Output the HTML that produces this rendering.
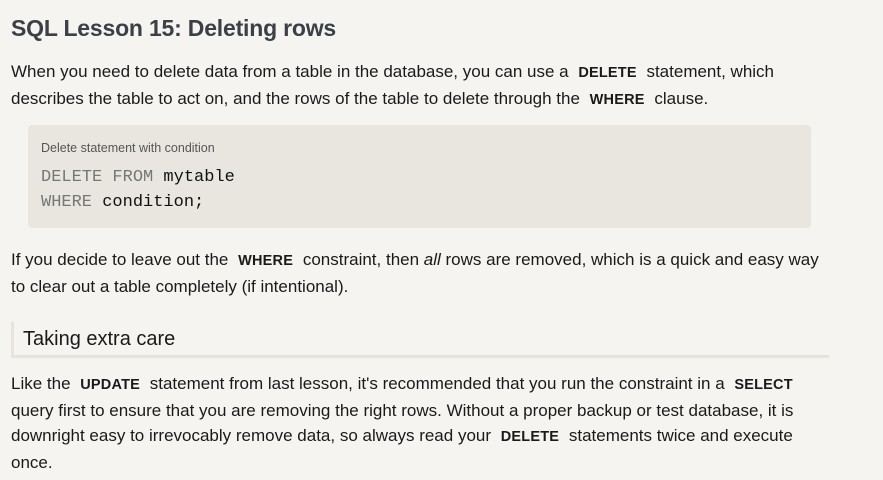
<!DOCTYPE html>
<html><head><style>
body{margin:0;background:#f5f4f0;width:883px;height:480px;overflow:hidden;font-family:"Liberation Sans",sans-serif;color:#1a1a1a}
.p{position:absolute;left:11px;font-size:17px;line-height:25px;white-space:nowrap}
b{font-size:14.5px;padding:0 5px;letter-spacing:0.2px}
h1{position:absolute;left:11px;top:15px;margin:0;font-size:23px;font-weight:bold;color:#3b4046;letter-spacing:-0.2px}
.code{position:absolute;left:28px;top:125px;width:783px;height:103px;background:#e8e6df;border-radius:4px}
.cap{position:absolute;left:13px;top:16px;font-size:12.5px;color:#555}
.mono{position:absolute;left:13px;font-family:"Liberation Mono",monospace;font-size:17px;color:#111}
.k{color:#777}
.h2{position:absolute;left:11px;top:322px;width:806px;height:33px;border-left:3px solid #e6e4dc;border-bottom:3px solid #e6e4dc;font-size:20px;line-height:34px;padding-left:9px;box-sizing:content-box}
</style></head><body>
<h1>SQL Lesson 15: Deleting rows</h1>
<div class="p" style="top:59px">When you need to delete data from a table in the database, you can use a <b>DELETE</b> statement, which<br>describes the table to act on, and the rows of the table to delete through the <b>WHERE</b> clause.</div>
<div class="code"><div class="cap">Delete statement with condition</div>
<div class="mono" style="top:43px"><span class="k">DELETE FROM</span> mytable</div>
<div class="mono" style="top:68px"><span class="k">WHERE</span> condition;</div></div>
<div class="p" style="top:247px">If you decide to leave out the <b>WHERE</b> constraint, then <i>all</i> rows are removed, which is a quick and easy way<br>to clear out a table completely (if intentional).</div>
<div class="h2">Taking extra care</div>
<div class="p" style="top:371px">Like the <b>UPDATE</b> statement from last lesson, it's recommended that you run the constraint in a <b>SELECT</b><br>query first to ensure that you are removing the right rows. Without a proper backup or test database, it is<br>downright easy to irrevocably remove data, so always read your <b>DELETE</b> statements twice and execute<br>once.</div>
</body></html>
